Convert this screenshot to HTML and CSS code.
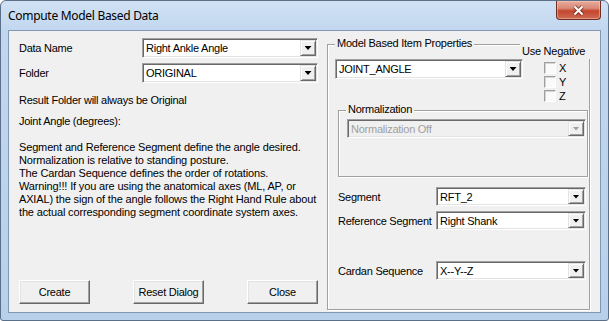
FILE: index.html
```html
<!DOCTYPE html>
<html lang="en">
<head>
  <meta charset="UTF-8" />
  <title>Compute Model Based Data</title>
  <link rel="stylesheet" href="styles.css">
</head>
<body>
  <div class="window">
    <div class="titlebar">
      <span class="title">Compute Model Based Data</span>
      <button class="close-btn" type="button">
        <svg width="13" height="11" viewBox="0 0 13 11">
          <path d="M2.5 1.5 L10.5 9.5 M10.5 1.5 L2.5 9.5" stroke="#4a1a12" stroke-width="4" stroke-opacity=".55" fill="none"/>
          <path d="M2.5 1.5 L10.5 9.5 M10.5 1.5 L2.5 9.5" stroke="#fff" stroke-width="2" fill="none"/>
        </svg>
      </button>
    </div>

    <div class="client">
      <div class="left">
        <div class="field-row">
          <span class="lbl">Data Name</span>
          <div class="combo combo-wide">
            <span class="combo-text">Right Ankle Angle</span>
            <span class="drop"><i class="arrow"></i></span>
          </div>
        </div>
        <div class="field-row row-folder">
          <span class="lbl">Folder</span>
          <div class="combo combo-wide">
            <span class="combo-text">ORIGINAL</span>
            <span class="drop"><i class="arrow"></i></span>
          </div>
        </div>

        <p class="note">Result Folder will always be Original</p>
        <p class="note note-joint">Joint Angle (degrees):</p>

        <p class="desc">
          Segment and Reference Segment define the angle desired.<br>
          Normalization is relative to standing posture.<br>
          The Cardan Sequence defines the order of rotations.<br>
          Warning!!! If you are using the anatomical axes (ML, AP, or<br>
          AXIAL) the sign of the angle follows the Right Hand Rule about<br>
          the actual corresponding segment coordinate system axes.
        </p>

        <div class="buttons">
          <button class="btn" type="button">Create</button>
          <button class="btn" type="button">Reset Dialog</button>
          <button class="btn" type="button">Close</button>
        </div>
      </div>

      <div class="group props">
        <span class="group-title">Model Based Item Properties</span>
        <span class="use-neg">Use Negative</span>

        <div class="props-top">
          <div class="combo combo-joint">
            <span class="combo-text">JOINT_ANGLE</span>
            <span class="drop"><i class="arrow"></i></span>
          </div>
          <div class="checks">
            <label class="chk"><span class="box"></span>X</label>
            <label class="chk"><span class="box"></span>Y</label>
            <label class="chk"><span class="box"></span>Z</label>
          </div>
        </div>

        <div class="group norm">
          <span class="group-title">Normalization</span>
          <div class="combo combo-norm disabled">
            <span class="combo-text">Normalization Off</span>
            <span class="drop"><i class="arrow"></i></span>
          </div>
        </div>

        <div class="seg-row row-segment">
          <span class="seg-lbl">Segment</span>
          <div class="combo combo-seg">
            <span class="combo-text">RFT_2</span>
            <span class="drop"><i class="arrow"></i></span>
          </div>
        </div>
        <div class="seg-row row-ref">
          <span class="seg-lbl">Reference Segment</span>
          <div class="combo combo-seg">
            <span class="combo-text">Right Shank</span>
            <span class="drop"><i class="arrow"></i></span>
          </div>
        </div>
        <div class="seg-row row-cardan">
          <span class="seg-lbl">Cardan Sequence</span>
          <div class="combo combo-seg">
            <span class="combo-text">X--Y--Z</span>
            <span class="drop"><i class="arrow"></i></span>
          </div>
        </div>
      </div>
    </div>
  </div>
</body>
</html>
```

FILE: styles.css
```css
body {
  margin: 0;
  background: #fff;
}
.window {
  width: 609px;
  height: 321px;
  box-sizing: border-box;
  border: 1px solid #5a6f88;
  border-radius: 6px 6px 3px 3px;
  background: linear-gradient(to bottom, #d0e1f4 0, #c1d7ef 30px, #b9d0ea 100%);
  padding: 0 7px 7px 7px;
  display: flex;
  flex-direction: column;
  font-family: "Liberation Sans", Arial, sans-serif;
  font-size: 11px;
  letter-spacing: -0.25px;
  color: #000;
}
.titlebar {
  height: 29px;
  margin: 0 -7px;
  padding: 0 7px 0 7px;
  display: flex;
  justify-content: space-between;
  align-items: flex-start;
}
.title {
  font-family: "Noto Sans", "Open Sans", sans-serif;
  font-size: 12px;
  letter-spacing: -0.3px;
  line-height: 30px;
  color: #000;
}
.close-btn {
  width: 45px;
  height: 19px;
  margin: 0;
  padding: 0;
  border: 1px solid #6e2e24;
  border-top: none;
  border-radius: 0 0 4px 4px;
  background: linear-gradient(to bottom, #e8aa9c 0, #d98a78 40%, #c4462e 55%, #cf6a52 100%);
  box-shadow: inset 0 0 0 1px rgba(255, 210, 200, 0.45);
  display: flex;
  align-items: center;
  justify-content: center;
}
.client {
  flex: 1;
  border: 1px solid #8197b2;
  background: #f0f0f0;
  display: flex;
}
.left {
  width: 318px;
  box-sizing: border-box;
  padding: 7px 0 8px 10px;
  display: flex;
  flex-direction: column;
}
.field-row {
  display: flex;
  align-items: center;
}
.row-folder {
  margin-top: 5px;
}
.lbl {
  width: 123px;
}
.note {
  margin: 11px 0 0;
  line-height: 13px;
}
.note-joint {
  margin-top: 8px;
}
.desc {
  margin: 13px 0 0;
  line-height: 13px;
  letter-spacing: -0.15px;
  white-space: nowrap;
}
.buttons {
  margin-top: auto;
  display: flex;
  gap: 43px;
}
.btn {
  width: 71px;
  height: 24px;
  margin: 0;
  padding: 0;
  font: inherit;
  letter-spacing: inherit;
  color: #000;
  background: #f0f0f0;
  border: 1px solid;
  border-color: #fff #696969 #696969 #fff;
  box-shadow: inset -1px -1px 0 #a0a0a0, inset 1px 1px 0 #e3e3e3;
}

/* combo boxes */
.combo {
  display: flex;
  align-items: stretch;
  height: 20px;
  box-sizing: border-box;
  padding: 1px;
  background: #fff;
  border: 1px solid;
  border-color: #a0a0a0 #fff #fff #a0a0a0;
  box-shadow: inset 1px 1px 0 #696969, inset -1px -1px 0 #e3e3e3;
}
.combo-text {
  flex: 1;
  padding-left: 2px;
  line-height: 16px;
  white-space: nowrap;
  overflow: hidden;
}
.drop {
  width: 16px;
  box-sizing: border-box;
  background: #f0f0f0;
  border: 1px solid;
  border-color: #e3e3e3 #696969 #696969 #e3e3e3;
  box-shadow: inset 1px 1px 0 #fff, inset -1px -1px 0 #a0a0a0;
  display: flex;
  align-items: center;
  justify-content: center;
}
.arrow {
  width: 7px;
  height: 4px;
  background: #000;
  clip-path: polygon(0 0, 100% 0, 50% 100%);
}
.combo-wide {
  width: 176px;
}
.combo-joint {
  width: 188px;
}
.combo-norm {
  width: 239px;
  height: 19px;
}
.combo-seg {
  width: 150px;
  height: 19px;
}
.combo.disabled {
  background: #f0f0f0;
  color: #a0a0a0;
}
.combo.disabled .arrow {
  background: #a0a0a0;
}

/* group boxes */
.group {
  position: relative;
  box-sizing: border-box;
  border: 1px solid #a0a0a0;
  box-shadow: 1px 1px 0 #fff, inset 1px 1px 0 #fff;
}
.group-title {
  position: absolute;
  top: -8px;
  left: 7px;
  padding: 0 2px;
  line-height: 13px;
  background: #f0f0f0;
  white-space: nowrap;
}
.props {
  width: 263px;
  height: 266px;
  margin-top: 13px;
  padding: 14px 0 0 7px;
}
.use-neg {
  position: absolute;
  top: -5px;
  left: 192px;
  right: -4px;
  padding: 5px 2px 1px;
  line-height: 13px;
  background: #f0f0f0;
  white-space: nowrap;
}
.props-top {
  display: flex;
  align-items: flex-start;
}
.checks {
  margin: 3px 0 0 21px;
  display: flex;
  flex-direction: column;
}
.chk {
  height: 14px;
  display: flex;
  align-items: flex-start;
  gap: 3px;
  line-height: 12px;
}
.box {
  width: 12px;
  height: 12px;
  box-sizing: border-box;
  background: #fafafa;
  border: 1px solid;
  border-color: #a0a0a0 #fff #fff #a0a0a0;
  box-shadow: inset 1px 1px 0 #d4d4d4;
}
.norm {
  width: 250px;
  height: 67px;
  margin: 6px 0 0 3px;
  padding: 8px 0 0 8px;
}
.seg-row {
  display: flex;
  align-items: center;
  padding-left: 3px;
}
.row-segment {
  margin-top: 10px;
}
.row-ref {
  margin-top: 5px;
}
.row-cardan {
  margin-top: 31px;
}
.seg-lbl {
  width: 98px;
  white-space: nowrap;
}
```
